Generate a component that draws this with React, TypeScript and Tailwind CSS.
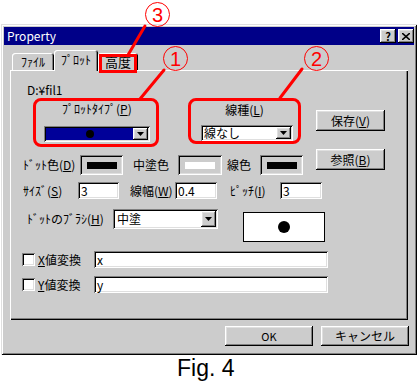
import type { ReactNode } from 'react';

const raised =
  'bg-[#cccccc] shadow-[inset_-1px_-1px_#000,inset_1px_1px_#fff,inset_-2px_-2px_#808080,inset_2px_2px_#dfdfdf]';
const sunken =
  'shadow-[inset_1px_1px_#808080,inset_-1px_-1px_#fff,inset_2px_2px_#000,inset_-2px_-2px_#dfdfdf]';
const frame =
  'bg-[#cccccc] shadow-[inset_1px_1px_#dfdfdf,inset_-1px_-1px_#000,inset_2px_2px_#fff,inset_-2px_-2px_#808080]';
const callout =
  'absolute z-30 w-[25px] h-[25px] rounded-full border-[1.5px] border-[#ff0000] flex items-center justify-center text-[#ff0000] font-[\'Liberation_Sans\',sans-serif] text-[20px] leading-[22px]';

const Arrow = () => (
  <svg width="7" height="4" viewBox="0 0 7 4">
    <path d="M0 0h7L3.5 4z" fill="#000" />
  </svg>
);

const DropButton = () => (
  <div className={`${raised} w-[15px] h-full flex items-center justify-center`}>
    <Arrow />
  </div>
);

const Button = ({ children, className }: { children: ReactNode; className: string }) => (
  <div className={`${raised} ${className} flex items-center justify-center`}>{children}</div>
);

const Field = ({ value, className }: { value: string; className: string }) => (
  <div className={`${sunken} ${className} bg-white h-[17px] flex items-center pl-[3px] pt-[1px]`}>{value}</div>
);

const Swatch = ({ bar, className }: { bar: string; className: string }) => (
  <div className={`${sunken} ${className} h-[20px] flex items-center justify-center`}>
    <div className={`${bar} w-[30px] h-[7px]`} />
  </div>
);

export default function App() {
  return (
    <div className="relative w-[418px] h-[383px] bg-white overflow-hidden font-['Noto_Sans_CJK_JP',sans-serif] text-[12px] leading-[12px] text-black">
      <div className={`${frame} ml-[1px] mt-[24px] w-[416px] h-[331px] p-[3px] flex flex-col`}>
        {/* title bar */}
        <div className="h-[18px] bg-[#000088] flex items-center justify-between pl-[3px]">
          <span className="text-white text-[12px]">Property</span>
          <div className="flex gap-[2px]">
            <Button className="w-[16px] h-[14px] text-[11px] font-bold">?</Button>
            <Button className="w-[16px] h-[14px]">
              <svg width="8" height="7" viewBox="0 0 8 7">
                <path d="M0 0l8 7M8 0L0 7" stroke="#000" strokeWidth="1.6" />
              </svg>
            </Button>
          </div>
        </div>

        {/* tabs */}
        <div className="h-[25px] flex items-end pl-[8px]">
          <div className="w-[42px] h-[17px] rounded-t-[3px] shadow-[inset_1px_1px_#fff,inset_-1px_0_#000,inset_-2px_0_#808080] flex items-center justify-center pt-[1px]">
            ﾌｧｲﾙ
          </div>
          <div className="relative z-10 -mb-[1px] w-[44px] h-[21px] bg-[#cccccc] rounded-t-[3px] shadow-[inset_1px_1px_#fff,inset_-1px_0_#000,inset_-2px_0_#808080] flex items-start justify-center pt-[4px]">
            ﾌﾟﾛｯﾄ
          </div>
          <div className="relative z-20 w-[40px] h-[17px] rounded-t-[3px] shadow-[inset_1px_1px_#fff,inset_-1px_0_#000,inset_-2px_0_#808080] flex items-center justify-center pt-[1px] text-[13px]">
            高度
            <div className="absolute left-[1px] top-[1px] w-[38px] h-[19px] border-[3px] border-[#ff0000]" />
          </div>
        </div>

        {/* panel */}
        <div className="ml-[6px] w-[398px] h-[250px] shadow-[inset_1px_1px_#fff,inset_-1px_-1px_#000,inset_-2px_-2px_#808080] flex flex-col">
          <div className="mt-[13px] ml-[17px] h-[14px] leading-[14px]">D:¥fil1</div>

          <div className="mt-[1px] flex items-start">
            <div className="w-[296px] flex flex-col">
              <div className="flex items-start">
                <div className="ml-[23px] w-[126px] h-[49px] border-[3px] border-[#ff0000] rounded-[8px] flex flex-col">
                  <div className="mt-[2px] pl-[26px] h-[12px]">
                    ﾌﾟﾛｯﾄﾀｲﾌﾟ(<u>P</u>)
                  </div>
                  <div className={`${sunken} mt-[11px] ml-[8px] w-[106px] h-[16px] p-[2px] flex`}>
                    <div className="flex-1 bg-[#000099] flex items-center justify-center">
                      <div className="w-[8px] h-[8px] rounded-full bg-black" />
                    </div>
                    <DropButton />
                  </div>
                </div>
                <div className="ml-[29px] w-[113px] h-[46px] border-[3px] border-[#ff0000] rounded-[8px] flex flex-col items-start">
                  <div className="mt-[3px] w-full text-center h-[12px]">
                    線種(<u>L</u>)
                  </div>
                  <div className={`${sunken} mt-[9px] ml-[10px] w-[92px] h-[17px] p-[2px] flex bg-white`}>
                    <div className="flex-1 flex items-center pl-[1px]">線なし</div>
                    <DropButton />
                  </div>
                </div>
              </div>

              <div className="mt-[8px] flex items-center h-[20px]">
                <div className="ml-[13px] w-[57px]">
                  ﾄﾞｯﾄ色(<u>D</u>)
                </div>
                <Swatch bar="bg-black" className="w-[43px]" />
                <div className="ml-[10px] w-[45px]">中塗色</div>
                <Swatch bar="bg-white" className="w-[44px]" />
                <div className="ml-[5px] w-[33px]">線色</div>
                <Swatch bar="bg-black" className="w-[43px]" />
              </div>
            </div>

            <div className="ml-[10px] mt-[12px] flex flex-col gap-[18px]">
              <Button className="w-[69px] h-[21px]">
                保存(<u>V</u>)
              </Button>
              <Button className="w-[69px] h-[21px]">
                参照(<u>B</u>)
              </Button>
            </div>
          </div>

          <div className="mt-[7px] flex items-center h-[17px]">
            <div className="ml-[13px] w-[55px]">
              ｻｲｽﾞ(<u>S</u>)
            </div>
            <Field value="3" className="w-[41px]" />
            <div className="ml-[11px] w-[45px]">
              線幅(<u>W</u>)
            </div>
            <Field value="0.4" className="w-[42px]" />
            <div className="ml-[13px] w-[50px]">
              ﾋﾟｯﾁ(<u>I</u>)
            </div>
            <Field value="3" className="w-[42px]" />
          </div>

          <div className="mt-[10px] flex items-start">
            <div className="ml-[17px] w-[86px] h-[20px] flex items-center">
              ﾄﾞｯﾄのﾌﾞﾗｼ(<u>H</u>)
            </div>
            <div className={`${sunken} w-[105px] h-[20px] p-[2px] flex bg-white`}>
              <div className="flex-1 flex items-center pl-[2px]">中塗</div>
              <DropButton />
            </div>
            <div className="ml-[25px] mt-[3px] w-[82px] h-[30px] bg-white border border-black flex items-center justify-center">
              <div className="w-[12px] h-[12px] rounded-full bg-black" />
            </div>
          </div>

          <div className="mt-[9px] flex items-center h-[17px]">
            <div className={`${sunken} ml-[12px] w-[13px] h-[13px] bg-white`} />
            <div className="ml-[3px] w-[56px]">
              <u>X</u>値変換
            </div>
            <Field value="x" className="w-[234px]" />
          </div>
          <div className="mt-[8px] flex items-center h-[17px]">
            <div className={`${sunken} ml-[12px] w-[13px] h-[13px] bg-white`} />
            <div className="ml-[3px] w-[56px]">
              <u>Y</u>値変換
            </div>
            <Field value="y" className="w-[234px]" />
          </div>
        </div>

        <div className="mt-[6px] pr-[5px] flex justify-end gap-[8px]">
          <Button className="w-[88px] h-[20px] text-[11px]">OK</Button>
          <Button className="w-[88px] h-[20px]">キャンセル</Button>
        </div>
      </div>

      <div className="mt-[2px] ml-[177px] font-['Liberation_Sans',sans-serif] text-[23px] leading-[23px]">Fig. 4</div>

      {/* annotation callouts */}
      <svg className="absolute left-0 top-0 pointer-events-none z-30" width="418" height="383">
        <g stroke="#ff0000" strokeWidth="3" strokeLinecap="round">
          <line x1="128" y1="55" x2="145" y2="26" />
          <line x1="140" y1="99" x2="164" y2="70" />
          <line x1="280" y1="98" x2="302" y2="69" />
        </g>
      </svg>
      <span className={`${callout} left-[145px] top-[2px]`}>3</span>
      <span className={`${callout} left-[163px] top-[46px]`}>1</span>
      <span className={`${callout} left-[304px] top-[46px]`}>2</span>
    </div>
  );
}
